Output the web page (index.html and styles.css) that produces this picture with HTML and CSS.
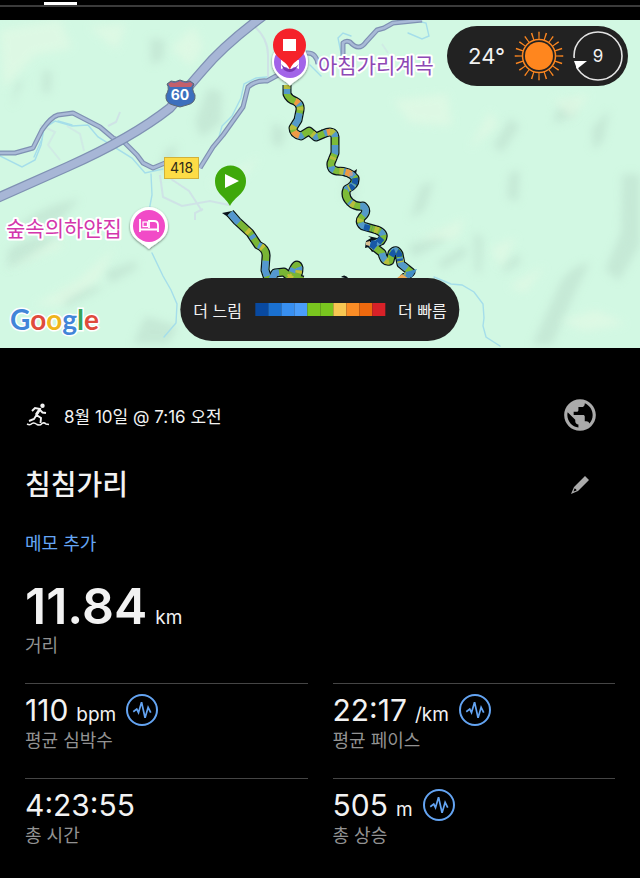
FILE: index.html
```html
<!DOCTYPE html>
<html lang="ko">
<head>
<meta charset="utf-8">
<meta name="viewport" content="width=device-width, initial-scale=1">
<title>침침가리</title>
<link rel="stylesheet" href="styles.css">
</head>
<body>
<div class="tabs"><span class="tab-mark"></span></div>
<section class="map">
<svg class="map-art" viewBox="0 20 640 328" preserveAspectRatio="xMidYMid slice" role="img" aria-label="지도">
  <defs>
    <filter id="soft" x="-20%" y="-20%" width="140%" height="140%"><feGaussianBlur stdDeviation="4"/></filter>
    <filter id="shadow" x="-30%" y="-30%" width="160%" height="160%"><feDropShadow dx="0" dy="1" stdDeviation="1.2" flood-opacity=".5"/></filter>
    <path id="track" d="M287 85V94Q289 99 295 101Q301 104 300 110L298 120L293 128Q293 134 301 136L309 131L316 137L323 134Q334 129 335 137V153L331 163Q330 170 337 171Q350 171 355 178Q356 185 347 189Q344 196 350 202Q355 207 363 206Q369 211 362 217Q358 222 363 226L377 230Q387 234 381 241L372 245L377 249L382 253Q384 263 390 261L392 253Q396 248 399 254L401 264L411 272L403 279"/>
    <path id="start" d="M230 213L237 221L250 233L258 245Q267 249 266 257L265 270L269 282M271 281L275 273L284 272L290 277L293 270Q297 261 299 268Q299 274 296 278L303 280"/>
  </defs>
  <rect y="20" width="640" height="328" fill="#d2f8e3"/>
  <g filter="url(#soft)" fill="#b9dac9" opacity=".5">
    <path d="M150 38L165 40L163 60L151 65ZM43 70L52 72L50 94L42 92ZM208 88L222 92L221 123L201 138L195 122ZM166 150L178 144L168 175L158 170ZM12 108L17 95L24 80L16 82Z"/>
    <path d="M8 250Q30 234 59 237Q39 256 7 269ZM105 271L135 261L138 268L110 284ZM59 298Q81 283 105 287L68 307ZM14 229Q45 203 80 199L58 222ZM145 316L178 326L168 344H133Z"/>
    <path d="M273 121L287 132L280 149L271 142ZM421 185L434 181L425 210L410 219ZM346 175L356 176L354 203L343 198ZM474 232L483 238L481 274L475 271ZM438 262L465 245L467 255L442 270Z"/>
    <path d="M493 146L510 118L520 126L502 153ZM558 107L575 100L574 117L553 124ZM622 174H640V245L619 281L605 270L621 232ZM502 266L518 253L521 263L504 273ZM408 245L450 232L442 243L413 258Z"/>
    <path d="M560 283Q570 266 590 262L574 295L552 345H532ZM592 128L610 109L603 142L593 150ZM509 173L520 170L518 202L507 198Z"/>
  </g>
  <g filter="url(#soft)" fill="#e2f9e5" opacity=".7">
    <path d="M0 30L60 20L72 48L35 55L4 88ZM171 48L194 26L203 47L191 67ZM89 27L126 24L117 50ZM34 305L81 278L115 247L98 280L60 306ZM210 184L260 157L232 190ZM7 269L58 239L63 247Z"/>
    <path d="M393 100L447 94L452 126L410 123ZM469 149L490 111L498 125ZM553 100L590 94L571 119ZM418 239L465 218L457 239ZM491 248L516 237L501 268ZM509 286L545 266L525 293ZM561 321L596 310L626 324L585 331Z"/>
  </g>
  <g fill="none" stroke="#a5deea" stroke-width="2" stroke-linecap="round">
    <path d="M0 156L22 167L35 160L41 145L44 128L55 121L72 126L88 125L98 137L132 158L145 173L163 169" stroke-width="1.5"/>
    <path d="M34 157L42 139M58 121L72 125M219 137L222 126L232 116L241 98L244 84L256 78L267 77M151 174L152 195L149 211M152 253L163 276L171 290L177 304L176 323L164 337M408 19L426 23L429 36L422 39L408 33M341 53L338 38L343 33L351 36M310 65L321 76M434 277L451 284L462 285L474 292L483 304L484 318L483 326L486 337L500 346" stroke-width="1.4"/>
  </g>
  <g fill="none" stroke="#cdd5e7" stroke-width="2">
    <path d="M171 179L189 191L202 211M160 175L163 197L182 206L210 201L229 205M195 220V213L203 209M253 25Q268 38 268 55L268 77M120 112L116 122L108 126" opacity=".6"/>
    <path d="M40 125L55 132L48 145L60 160M67 126L80 134L84 151M382 44L388 53" opacity=".35"/>
  </g>
  <g fill="none" stroke="#7f91b3" stroke-linejoin="round">
    <path d="M0 153H15L33 148L42 130Q51 117 58 115L73 113L100 127L113 138L125 143L137 155L143 163L153 168L165 163M200 168L213 147L223 135L243 107L248 87Q256 80 267 81L278 75M306 53Q316 52 318 64M343 57V43Q346 40 350 42Q359 52 366 42L377 30L384 28L393 23L422 20" stroke-width="5"/>
    <path d="M0 153H15L33 148L42 130Q51 117 58 115L73 113L100 127L113 138L125 143L137 155L143 163L153 168L165 163M200 168L213 147L223 135L243 107L248 87Q256 80 267 81L278 75M306 53Q316 52 318 64M343 57V43Q346 40 350 42Q359 52 366 42L377 30L384 28L393 23L422 20" stroke="#a9bad7" stroke-width="2.6"/>
    <path d="M-5 199L67 167Q132 138 170 108L203 70Q224 45 263 16" stroke-width="10"/>
    <path d="M-5 199L67 167Q132 138 170 108L203 70Q224 45 263 16" stroke="#a7b6d6" stroke-width="7.5"/>
  </g>

  <g fill="none" stroke-linejoin="round">
    <use href="#track" stroke="#09131a" stroke-width="9"/>
    <use href="#start" stroke="#09131a" stroke-width="9"/>
    <path d="M350 174L357 169L355 179L343 176ZM366 241L371 238L368 236L377 238L379 248L372 252L369 247L365 248ZM222 213L232 211L234 221ZM316 140L322 129L324 137ZM341 277Q345 273 349 279" fill="#09131a"/>
    <use href="#track" stroke="#7dbb38" stroke-width="6.5"/>
    <use href="#track" stroke="#5499c9" stroke-width="6.500" stroke-dasharray="9 13 5 7 14 8"/>
    <use href="#track" stroke="#b8be3c" stroke-width="6.500" stroke-dasharray="4 24 3 17"/>
    <use href="#track" stroke="#ef9a45" stroke-width="6.500" stroke-dasharray="0 20 4 30 7 32 3 54 6 200"/>
    <use href="#start" stroke="#79b535" stroke-width="6.500"/>
    <use href="#start" stroke="#5497cf" stroke-width="6.500" stroke-dasharray="13 18 4 8 3 16 16 6 15 80"/>
    <use href="#start" stroke="#c4be38" stroke-width="6.500" stroke-dasharray="0 24 4 18 3 100"/>
    <path d="M355 178Q356 185 350 188M364 227L372 229M382 238L377 244L370 243L377 249M391 256Q396 248 399 254L400 261" stroke="#1758a6" stroke-width="6" stroke-dasharray="6 2"/>
    <path d="M406 272L417 269L412 277L405 279Z" fill="#438ec6"/>
    <path d="M396 279L402 274L409 279Z" fill="#efab57"/>
    <path d="M366 242L370 241V246L366 245Z" fill="#d9bf91"/>
    <circle cx="351" cy="174" r="2" fill="#c19a91"/>
  </g>

  <g class="place purple">
    <text x="318" y="73">아침가리계곡</text>
  </g>
  <g class="place pink">
    <text x="6" y="236">숲속의하얀집</text>
  </g>
  <g filter="url(#shadow)" fill="#fff">
    <path d="M290 86C286 80 272 77 272 61A18 18 0 0 1 308 61C308 77 294 80 290 86Z"/>
    <path d="M149 249C143 243 130 239 130 226A19 19 0 0 1 168 226C168 239 155 243 149 249Z"/>
  </g>
  <circle cx="290" cy="62" r="16" fill="#a264e8"/>
  <path d="M281 60H299V69L294 67L290 70L286 67L281 69Z" fill="#fff"/>
  <path d="M281 64Q290 74 299 64L295 70Q290 74 284 70Z" fill="#7737b2"/>
  <circle cx="149" cy="226" r="16" fill="#f14bc7"/>
  <path d="M140 219V232M140 229.500H158M158 232V225Q158 221 154 221H149V228" fill="none" stroke="#fff" stroke-width="1.8"/>
  <rect x="143" y="222" width="4.500" height="4.500" fill="none" stroke="#fff" stroke-width="1.2"/>
  <path d="M290 70C287 60 273 59 273 45A16.500 16.500 0 0 1 306 45C306 59 292 60 290 70Z" fill="#f5222a"/>
  <rect x="283" y="39" width="13" height="12" fill="#fff"/>
  <path d="M230 206C226 197 215 194 215 181A15.500 15.500 0 0 1 246 181C246 194 234 197 230 206Z" fill="#3fa80b"/>
  <path d="M225 174L239 181L225 188Z" fill="#fff"/>
  <path d="M167 84L171 81Q175 83 180 80Q185 83 190 81L194 84Q191 89 195 95Q196 103 187 105L180 107L173 105Q165 103 166 95Q170 89 167 84Z" fill="#3d6fbd" stroke="#5d6670"/>
  <path d="M168 84L171 82Q175 84 180 81Q185 84 190 82L193 84L191 87H170Z" fill="#c3606b"/>
  <text class="shield" x="180" y="100">60</text>
  <rect x="164.500" y="157.500" width="34" height="21" fill="#fddc46" stroke="#d2b13a"/>
  <text class="route" x="181.500" y="173">418</text>
  <text class="google" x="10" y="330"><tspan fill="#4285d8">G</tspan><tspan fill="#df4b3d">o</tspan><tspan fill="#efb51d">o</tspan><tspan fill="#4285d8">g</tspan><tspan fill="#37a45a">l</tspan><tspan fill="#df4b3d">e</tspan></text>
</svg>
<div class="weather">
  <span class="temp">24°</span>
  <svg class="sun" viewBox="0 0 50 50" aria-hidden="true"><g fill="none" stroke="#fb8620"><circle cx="25" cy="25" r="20.500" stroke-width="7.500" pathLength="200" stroke-dasharray="2 8" stroke-dashoffset="1"/><circle cx="25" cy="25" r="16.500" stroke-width="1.500"/></g><circle cx="25" cy="25" r="14" fill="#ff861e"/></svg>
  <span class="wind"><svg viewBox="0 0 50 50" aria-hidden="true"><circle cx="25" cy="25" r="24" fill="none" stroke="#e4e4e4" stroke-width="1.600"/><path d="M0 27H3V37H0Z" fill="#222"/><path d="M1 30L14 30L4 38Z" fill="#fff"/></svg><span>9</span></span>
</div>
<div class="legend"><span>더 느림</span><span class="scale"><i class="c1"></i><i class="c2"></i><i class="c3"></i><i class="c4"></i><i class="c5"></i><i class="c5"></i><i class="c6"></i><i class="c7"></i><i class="c8"></i><i class="c9"></i></span><span>더 빠름</span></div>
</section>

<main class="details">
  <div class="row meta">
    <svg class="runner" viewBox="0 0 24 24" aria-hidden="true"><circle cx="16.500" cy="2.700" r="2.200" fill="currentColor"/><path d="M6 8L9 5L14 6L10.500 12L15 15L14.500 20M10.500 12L8 16L3 18M14 7L16.500 9.500L20 10" fill="none" stroke="currentColor" stroke-width="1.900"/><path d="M13 5L15 7L11 13L9 11Z" fill="currentColor"/><path d="M1 21Q4 22.500 6 20.500Q8 19 11 21.500Q14 23 16 20.500Q18 19 20 21L23 21.500" fill="none" stroke="currentColor" stroke-width="1.500"/></svg>
    <time>8월 10일 @ 7:16 오전</time>
    <button class="icon" aria-label="공개 설정"><svg class="globe" viewBox="0 0 24 24"><path fill="currentColor" d="M12 2C6.480 2 2 6.480 2 12s4.480 10 10 10 10-4.480 10-10S17.520 2 12 2zm-1 17.930c-3.950-.49-7-3.850-7-7.930 0-.62.08-1.210.21-1.790L9 15v1c0 1.100.9 2 2 2v1.930zm6.900-2.540c-.26-.81-1-1.390-1.900-1.390h-1v-3c0-.55-.45-1-1-1H8v-2h2c.55 0 1-.45 1-1V7h2c1.100 0 2-.9 2-2v-.41c2.930 1.190 5 4.060 5 7.410 0 2.080-.8 3.970-2.100 5.390z"/></svg></button>
  </div>
  <div class="row title">
    <h1>침침가리</h1>
    <button class="icon" aria-label="이름 수정"><svg class="pencil" viewBox="0 0 38 38"><path fill="currentColor" fill-rule="evenodd" d="M24 10L28 14L17 25L10 28L13 21ZM13.500 22.500L12.500 25.500L15.500 24.500L15 23Z"/></svg></button>
  </div>
  <a class="memo" href="#">메모 추가</a>
  <div class="stat distance"><p class="value">11.84<small>km</small></p><p class="label">거리</p></div>
  <div class="grid">
    <div class="stat"><p class="value">110<small>bpm</small><button class="pulse" aria-label="심박수 차트"><svg viewBox="0 0 32 32"><path d="M6 18L10 15L12 19L15.500 7L19.500 25L23 13L26 19"/></svg></button></p><p class="label">평균 심박수</p></div>
    <div class="stat"><p class="value">22:17<small>/km</small><button class="pulse" aria-label="페이스 차트"><svg viewBox="0 0 32 32"><path d="M6 18L10 15L12 19L15.500 7L19.500 25L23 13L26 19"/></svg></button></p><p class="label">평균 페이스</p></div>
    <div class="stat"><p class="value">4:23:55</p><p class="label">총 시간</p></div>
    <div class="stat"><p class="value">505<small>m</small><button class="pulse" aria-label="고도 차트"><svg viewBox="0 0 32 32"><path d="M6 18L10 15L12 19L15.500 7L19.500 25L23 13L26 19"/></svg></button></p><p class="label">총 상승</p></div>
  </div>
</main>
</body>
</html>
```
FILE: styles.css
```css
* { box-sizing: border-box; }
body {
  margin: 0;
  background: #000;
  color: #f2f2f2;
  font-family: Inter, "Noto Sans CJK KR", sans-serif;
  font-size: 18px;
}
h1, p { margin: 0; }
button { padding: 0; border: 0; background: none; color: inherit; display: grid; place-items: center; }
svg { display: block; }

.tabs { height: 20px; padding: 2px 0 0 44px; background: linear-gradient(#3b3b3b, #3b3b3b) 0 5px / 100% 2px no-repeat; }
.tab-mark { display: block; width: 33px; height: 3px; background: #fff; }

.map { position: relative; aspect-ratio: 640 / 328; overflow: hidden; }
.map-art { width: 100%; height: 100%; }
.place { font-size: 21px; paint-order: stroke; stroke: #fff; stroke-width: 4px; stroke-linejoin: round; }
.purple { fill: #8d48b5; }
.pink { fill: #d336ac; }
.shield { font-size: 14px; font-weight: 700; fill: #fff; text-anchor: middle; }
.route { font-size: 14px; fill: #302b18; text-anchor: middle; }
.google { font-family: Lato, sans-serif; font-size: 28px; font-weight: 700; paint-order: stroke; stroke: #fff; stroke-width: 3px; }

.weather, .legend { position: absolute; display: flex; align-items: center; background: #222; border-radius: 32px; }
.weather { top: 6px; right: 12px; height: 60px; padding: 0 5px 0 21px; gap: 9px; }
.temp { font-size: 22px; }
.sun { width: 50px; height: 50px; }
.wind { display: grid; place-items: center; font-size: 17px; }
.wind > * { grid-area: 1 / 1; }
.wind svg { width: 50px; height: 50px; }
.legend { left: 50%; bottom: 7px; transform: translateX(-50%); height: 63px; padding: 0 13px; gap: 13px; font-size: 16px; white-space: nowrap; }
.scale { display: flex; height: 13px; }
.scale i { width: 13px; }
.c1 { background: #0849a0; }
.c2 { background: #1a70d0; }
.c3 { background: #388ff0; }
.c4 { background: #4a9dfa; }
.c5 { background: #79c51f; }
.c6 { background: #f7c752; }
.c7 { background: #fa8d26; }
.c8 { background: #ee690e; }
.c9 { background: #d82128; }

.details { padding: 48px 25px 0; }
.row { display: flex; align-items: center; min-height: 38px; }
.row .icon { margin-left: auto; margin-right: 16px; color: #ababab; }
.meta { font-size: 17px; }
.runner { width: 24px; height: 24px; margin: 0 14px 0 1px; }
.globe, .pencil { width: 38px; height: 38px; }
.title { margin-top: 32px; }
h1 { font-size: 28px; font-weight: 500; line-height: 38px; }
.memo { display: block; width: max-content; margin-top: 28px; line-height: 24px; color: #65a6f5; text-decoration: none; }
.value { display: flex; align-items: baseline; height: 38px; line-height: 38px; font-size: 30px; }
.value small { margin-left: 8px; font-size: 19px; }
.pulse { align-self: center; width: 32px; height: 32px; margin-left: 10px; border: 2px solid #64a4f2; border-radius: 50%; }
.pulse svg { width: 28px; height: 28px; fill: none; stroke: #64a4f2; stroke-width: 2; }
.label { line-height: 24px; color: #929292; }
.distance { margin-top: 22px; }
.distance .value { height: 56px; line-height: 56px; font-size: 50px; font-weight: 600; }
.distance small { font-weight: 400; }
.grid { display: grid; grid-template-columns: 1fr 1fr; column-gap: 25px; margin-top: 25px; }
.grid .stat { padding: 7px 0 25px; border-top: 1px solid #454545; }
```
